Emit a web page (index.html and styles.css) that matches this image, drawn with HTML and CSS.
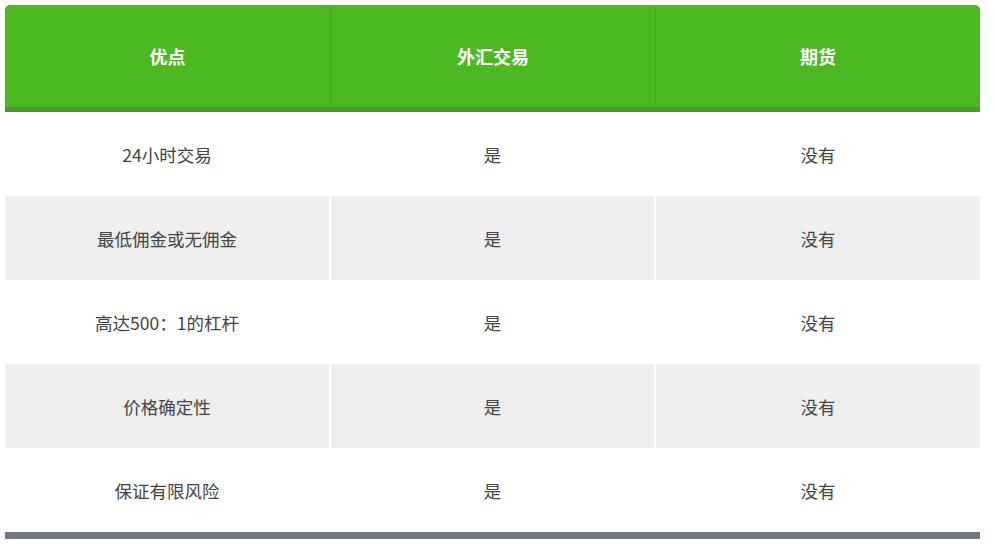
FILE: index.html
```html
<!DOCTYPE html>
<html lang="zh">
<head>
<meta charset="utf-8">
<link rel="stylesheet" href="styles.css">
</head>
<body>
<div class="tbl">
  <div class="row head">
    <div class="cell">优点</div>
    <div class="cell">外汇交易</div>
    <div class="cell">期货</div>
  </div>
  <div class="row">
    <div class="cell">24小时交易</div>
    <div class="cell">是</div>
    <div class="cell">没有</div>
  </div>
  <div class="row alt">
    <div class="cell">最低佣金或无佣金</div>
    <div class="cell">是</div>
    <div class="cell">没有</div>
  </div>
  <div class="row">
    <div class="cell">高达500：1的杠杆</div>
    <div class="cell">是</div>
    <div class="cell">没有</div>
  </div>
  <div class="row alt">
    <div class="cell">价格确定性</div>
    <div class="cell">是</div>
    <div class="cell">没有</div>
  </div>
  <div class="row">
    <div class="cell">保证有限风险</div>
    <div class="cell">是</div>
    <div class="cell">没有</div>
  </div>
  <div class="foot"></div>
</div>
</body>
</html>
```

FILE: styles.css
```css
html, body { margin: 0; padding: 0; background: #fff; }
body { padding: 5px 15px 0 5px; font-family: "Noto Sans CJK SC", "Liberation Sans", sans-serif; }
.tbl { width: 975px; }
.row { display: grid; grid-template-columns: 324px 325px 324px; column-gap: 1px; height: 84px; }
.row.alt { column-gap: 2px; grid-template-columns: 324px 323px 324px; }
.cell { display: flex; align-items: center; justify-content: center; font-size: 17.5px; color: #444; font-weight: 400; }
.row.alt .cell { background: #eeeeee; }
.head { height: 102px; background: #4db922; border-radius: 5px 5px 0 0; border-bottom: 5px solid #469f22; column-gap: 0; grid-template-columns: 326px 325px 324px; }
.head .cell { color: #fff; font-weight: 700; font-size: 18px; border-right: 1px solid #45a521; }
.head .cell:last-child { border-right: none; }
.foot { height: 7px; background: #727785; }
```
